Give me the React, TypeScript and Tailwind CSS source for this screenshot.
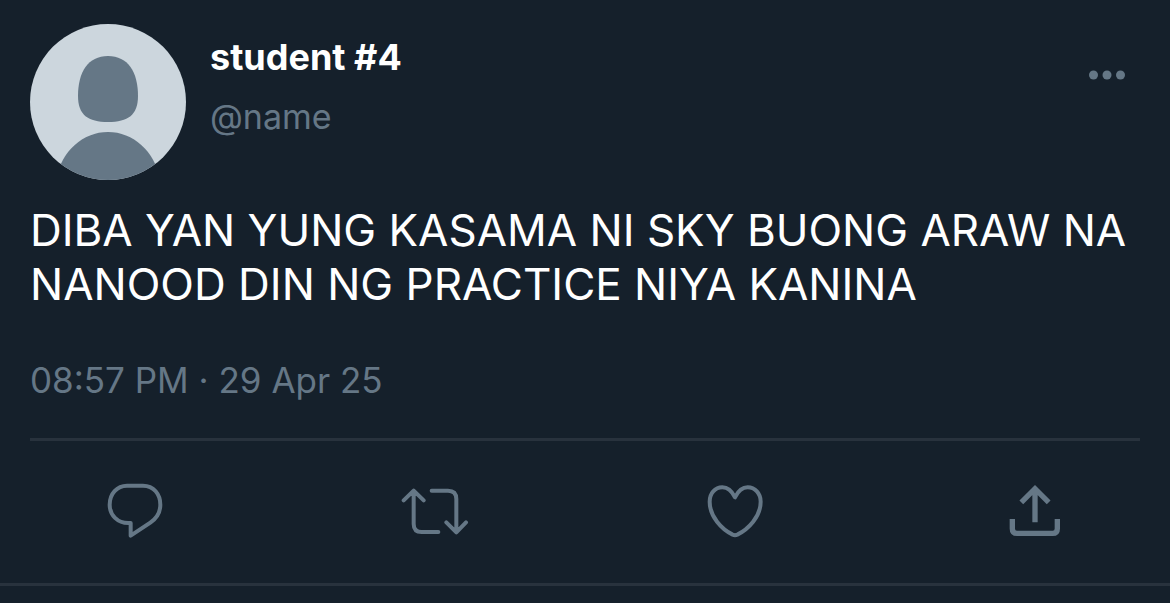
import type { ReactNode } from "react";

const ACTIONS: { label: string; icon: ReactNode }[] = [
  {
    label: "Reply",
    icon: (
      <path
        d="M96 47H144C176 47 196 73 196 104C196 128 185 145 166 158L107 197V159H100C68 159 44 136 44 104C44 71 66 47 96 47Z"
        strokeWidth="12"
      />
    ),
  },
  {
    label: "Retweet",
    icon: (
      <path
        d="M26 91L56 62L86 91M56 64V162Q56 186 80 186H130M110 62H159Q184 62 184 87V185M154 157L184 187L213 157"
        strokeWidth="12"
      />
    ),
  },
  {
    label: "Like",
    icon: (
      <path
        d="M120 82C111 64 98 52 82 52C60 52 44 70 44 95C44 140 80 178 113 194Q120 197 127 194C160 178 197 140 197 95C197 70 180 52 158 52C142 52 129 64 120 82Z"
        strokeWidth="12"
      />
    ),
  },
  {
    label: "Share",
    icon: (
      <path
        d="M79 97L120 56L161 97M120 56V157M52 147V176Q52 190 66 190H173Q187 190 187 176V147"
        strokeWidth="16"
        strokeLinecap="butt"
        strokeLinejoin="miter"
      />
    ),
  },
];

function Avatar() {
  return (
    <svg viewBox="0 0 156 156" className="size-[156px] shrink-0 rounded-full bg-[#ccd6dd]" role="img" aria-label="Profile picture">
      <g fill="#657786">
        <path d="M78 32C98 32 108 48 108 72C108 91 98 98 78 98C58 98 48 91 48 72C48 48 58 32 78 32Z" />
        <path d="M26 156C31 127 53 108 78 108C103 108 125 127 130 156Z" />
      </g>
    </svg>
  );
}

export default function App() {
  return (
    <main className="min-h-screen bg-[#15202b] font-['Inter','Liberation_Sans',sans-serif] text-[#657786]">
      <article className="border-b-3 border-[#28323d]">
        <div className="px-[30px] pt-6">
          <header className="flex items-start gap-6">
            <Avatar />
            <div className="min-w-0 flex-1 pt-2">
              <h1 className="text-[36px] leading-[50px] font-bold text-white">student #4</h1>
              <p className="mt-[11px] text-[34px] leading-[48px]">@name</p>
            </div>
            <button type="button" aria-label="More" className="mt-8 mr-3">
              <svg viewBox="0 0 40 40" className="size-10" fill="currentColor">
                <circle cx="5.5" cy="19" r="4.5" />
                <circle cx="19" cy="19" r="4.5" />
                <circle cx="32.5" cy="19" r="4.5" />
              </svg>
            </button>
          </header>

          <p className="mt-[23px] text-[44px] leading-[54px] text-white">
            DIBA YAN YUNG KASAMA NI SKY BUONG ARAW NA NANOOD DIN NG PRACTICE NIYA KANINA
          </p>

          <time dateTime="2025-04-29T20:57" className="mt-[45px] block text-[35px] leading-[48px]">
            08:57 PM · 29 Apr 25
          </time>
          <hr className="mt-[34px] border-t-3 border-[#28323d]" />
        </div>

        <div className="flex justify-between px-[95px] pt-[29px] pb-[33px]">
          {ACTIONS.map((action) => (
            <button key={action.label} type="button" aria-label={action.label}>
              <svg
                viewBox="0 0 240 240"
                className="size-20"
                fill="none"
                stroke="currentColor"
                strokeLinecap="round"
                strokeLinejoin="round"
              >
                {action.icon}
              </svg>
            </button>
          ))}
        </div>
      </article>
    </main>
  );
}
